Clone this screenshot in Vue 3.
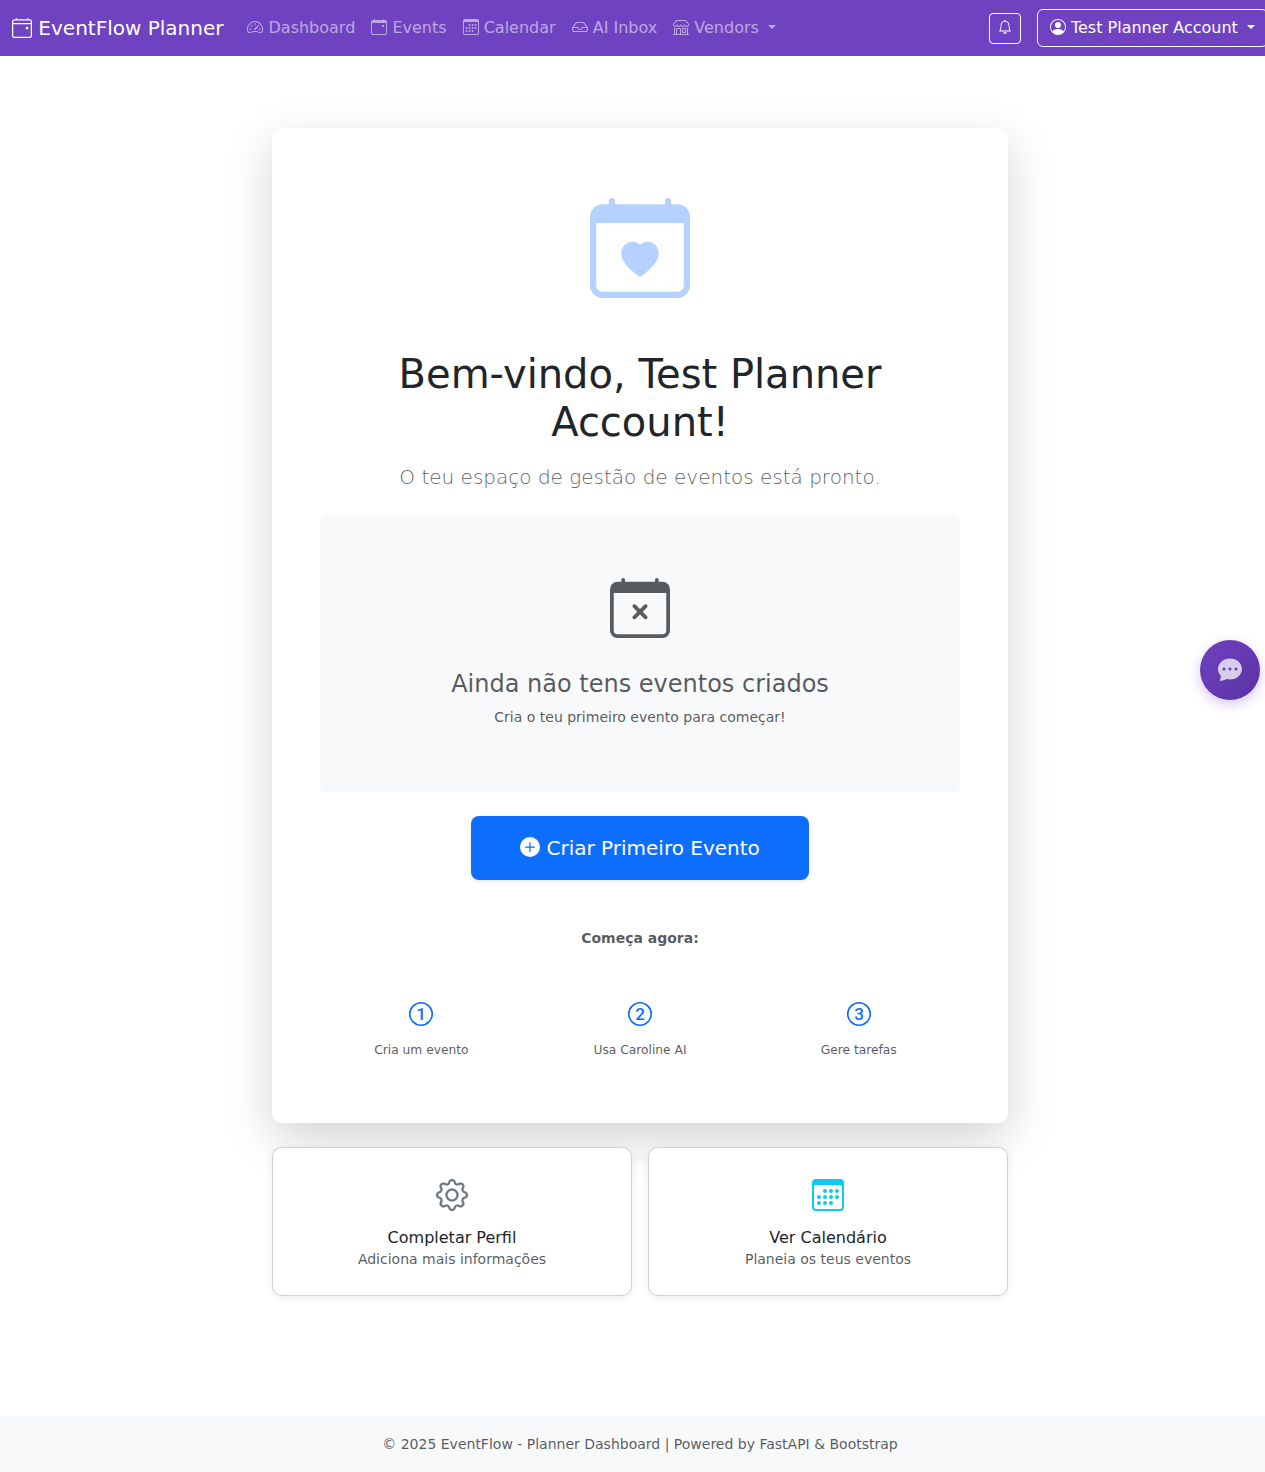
<script setup>
import { h } from 'vue'

const calendarFrame =
  'M3.5 0a.5.5 0 0 1 .5.5V1h8V.5a.5.5 0 0 1 1 0V1h1a2 2 0 0 1 2 2v11a2 2 0 0 1-2 2H2a2 2 0 0 1-2-2V3a2 2 0 0 1 2-2h1V.5a.5.5 0 0 1 .5-.5M1 4v10a1 1 0 0 0 1 1h12a1 1 0 0 0 1-1V4z'

const paths = {
  brand: [
    'M3.5 0a.5.5 0 0 1 .5.5V1h8V.5a.5.5 0 0 1 1 0V1h1a2 2 0 0 1 2 2v11a2 2 0 0 1-2 2H2a2 2 0 0 1-2-2V3a2 2 0 0 1 2-2h1V.5a.5.5 0 0 1 .5-.5M2 2a1 1 0 0 0-1 1v1h14V3a1 1 0 0 0-1-1zm13 3H1v9a1 1 0 0 0 1 1h12a1 1 0 0 0 1-1z',
    'M11 7.5a.5.5 0 0 1 .5-.5h1a.5.5 0 0 1 .5.5v1a.5.5 0 0 1-.5.5h-1a.5.5 0 0 1-.5-.5z'
  ],
  speedometer: [
    'M8 4a.5.5 0 0 1 .5.5V6a.5.5 0 0 1-1 0V4.5A.5.5 0 0 1 8 4M3.732 5.732a.5.5 0 0 1 .707 0l.915.914a.5.5 0 1 1-.708.708l-.914-.915a.5.5 0 0 1 0-.707M2 10a.5.5 0 0 1 .5-.5h1.586a.5.5 0 0 1 0 1H2.5A.5.5 0 0 1 2 10m9.5 0a.5.5 0 0 1 .5-.5h1.5a.5.5 0 0 1 0 1H12a.5.5 0 0 1-.5-.5m.754-4.246a.39.39 0 0 0-.527-.02L7.547 9.31a.91.91 0 1 0 1.302 1.258l3.434-4.297a.39.39 0 0 0-.029-.518z',
    'M0 10a8 8 0 1 1 15.547 2.661c-.442 1.253-1.845 1.602-2.932 1.25C11.309 13.488 9.475 13 8 13c-1.474 0-3.31.488-4.615.911-1.087.352-2.49.003-2.932-1.25A8 8 0 0 1 0 10m8-7a7 7 0 0 0-6.603 9.329c.203.575.923.876 1.68.63C4.397 12.533 6.358 12 8 12s3.604.532 4.923.96c.757.245 1.477-.056 1.68-.631A7 7 0 0 0 8 3'
  ],
  event: [
    'M11 6.5a.5.5 0 0 1 .5-.5h1a.5.5 0 0 1 .5.5v1a.5.5 0 0 1-.5.5h-1a.5.5 0 0 1-.5-.5z',
    calendarFrame
  ],
  calendar: [
    'M14 0H2a2 2 0 0 0-2 2v12a2 2 0 0 0 2 2h12a2 2 0 0 0 2-2V2a2 2 0 0 0-2-2M1 3.857C1 3.384 1.448 3 2 3h12c.552 0 1 .384 1 .857v10.286c0 .473-.448.857-1 .857H2c-.552 0-1-.384-1-.857z',
    'M6.5 7a1 1 0 1 0 0-2 1 1 0 0 0 0 2m3 0a1 1 0 1 0 0-2 1 1 0 0 0 0 2m3 0a1 1 0 1 0 0-2 1 1 0 0 0 0 2m-9 3a1 1 0 1 0 0-2 1 1 0 0 0 0 2m3 0a1 1 0 1 0 0-2 1 1 0 0 0 0 2m3 0a1 1 0 1 0 0-2 1 1 0 0 0 0 2m3 0a1 1 0 1 0 0-2 1 1 0 0 0 0 2m-9 3a1 1 0 1 0 0-2 1 1 0 0 0 0 2m3 0a1 1 0 1 0 0-2 1 1 0 0 0 0 2m3 0a1 1 0 1 0 0-2 1 1 0 0 0 0 2'
  ],
  inbox: [
    'M4.98 4a.5.5 0 0 0-.39.188L1.54 8H6a.5.5 0 0 1 .5.5 1.5 1.5 0 1 0 3 0A.5.5 0 0 1 10 8h4.46l-3.05-3.812A.5.5 0 0 0 11.02 4zm9.954 5H10.45a2.5 2.5 0 0 1-4.9 0H1.066l.32 2.562a.5.5 0 0 0 .497.438h12.234a.5.5 0 0 0 .496-.438zM3.809 3.563A1.5 1.5 0 0 1 4.981 3h6.038a1.5 1.5 0 0 1 1.172.563l3.7 4.625a.5.5 0 0 1 .105.374l-.39 3.124A1.5 1.5 0 0 1 14.117 13H1.883a1.5 1.5 0 0 1-1.489-1.314l-.39-3.124a.5.5 0 0 1 .106-.374z'
  ],
  shop: [
    'M2.97 1.35A1 1 0 0 1 3.73 1h8.54a1 1 0 0 1 .76.35l2.609 3.044A1.5 1.5 0 0 1 16 5.37v.255a2.375 2.375 0 0 1-4.25 1.458A2.37 2.37 0 0 1 9.875 8 2.37 2.37 0 0 1 8 7.083 2.37 2.37 0 0 1 6.125 8a2.37 2.37 0 0 1-1.875-.917A2.375 2.375 0 0 1 0 5.625V5.37a1.5 1.5 0 0 1 .361-.976zm1.78 4.275a1.375 1.375 0 0 0 2.75 0 .5.5 0 0 1 1 0 1.375 1.375 0 0 0 2.75 0 .5.5 0 0 1 1 0 1.375 1.375 0 1 0 2.75 0V5.37a.5.5 0 0 0-.12-.325L12.27 2H3.73L1.12 5.045A.5.5 0 0 0 1 5.37v.255a1.375 1.375 0 0 0 2.75 0 .5.5 0 0 1 1 0M1.5 8.5A.5.5 0 0 1 2 9v6h1v-5a1 1 0 0 1 1-1h3a1 1 0 0 1 1 1v5h6V9a.5.5 0 0 1 1 0v6h.5a.5.5 0 0 1 0 1H.5a.5.5 0 0 1 0-1H1V9a.5.5 0 0 1 .5-.5M4 15h3v-5H4zm5-5a1 1 0 0 1 1-1h2a1 1 0 0 1 1 1v3a1 1 0 0 1-1 1h-2a1 1 0 0 1-1-1zm3 0h-2v3h2z'
  ],
  bell: [
    'M8 16a2 2 0 0 0 2-2H6a2 2 0 0 0 2 2M8 1.918l-.797.161A4 4 0 0 0 4 6c0 .628-.134 2.197-.459 3.742-.16.767-.376 1.566-.663 2.258h10.244c-.287-.692-.502-1.49-.663-2.258C12.134 8.197 12 6.628 12 6a4 4 0 0 0-3.203-3.92zM14.22 12c.223.447.481.801.78 1H1c.299-.199.557-.553.78-1C2.68 10.2 3 6.88 3 6c0-2.42 1.72-4.44 4.005-4.901a1 1 0 1 1 1.99 0A5 5 0 0 1 13 6c0 .88.32 4.2 1.22 6'
  ],
  person: [
    'M11 6a3 3 0 1 1-6 0 3 3 0 0 1 6 0',
    'M0 8a8 8 0 1 1 16 0A8 8 0 0 1 0 8m8-7a7 7 0 0 0-5.468 11.37C3.242 11.226 4.805 10 8 10s4.757 1.225 5.468 2.37A7 7 0 0 0 8 1'
  ],
  heart: [
    calendarFrame,
    'M8 7.493c1.664-1.711 5.825 1.283 0 5.132-5.825-3.85-1.664-6.843 0-5.132'
  ],
  cross: [
    calendarFrame,
    'M6.146 7.146a.5.5 0 0 1 .708 0L8 8.293l1.146-1.147a.5.5 0 1 1 .708.708L8.707 9l1.147 1.146a.5.5 0 0 1-.708.708L8 9.707l-1.146 1.147a.5.5 0 0 1-.708-.708L7.293 9 6.146 7.854a.5.5 0 0 1 0-.708'
  ],
  plus: [
    'M16 8A8 8 0 1 1 0 8a8 8 0 0 1 16 0M8.5 4.5a.5.5 0 0 0-1 0v3h-3a.5.5 0 0 0 0 1h3v3a.5.5 0 0 0 1 0v-3h3a.5.5 0 0 0 0-1h-3z'
  ],
  gear: [
    'M8 4.754a3.246 3.246 0 1 0 0 6.492 3.246 3.246 0 0 0 0-6.492M5.754 8a2.246 2.246 0 1 1 4.492 0 2.246 2.246 0 0 1-4.492 0',
    'M9.796 1.343c-.527-1.79-3.065-1.79-3.592 0l-.094.319a.873.873 0 0 1-1.255.52l-.292-.16c-1.64-.892-3.433.902-2.54 2.541l.159.292a.873.873 0 0 1-.52 1.255l-.319.094c-1.79.527-1.79 3.065 0 3.592l.319.094a.873.873 0 0 1 .52 1.255l-.16.292c-.892 1.64.901 3.434 2.541 2.54l.292-.159a.873.873 0 0 1 1.255.52l.094.319c.527 1.79 3.065 1.79 3.592 0l.094-.319a.873.873 0 0 1 1.255-.52l.292.16c1.64.893 3.434-.902 2.54-2.541l-.159-.292a.873.873 0 0 1 .52-1.255l.319-.094c1.79-.527 1.79-3.065 0-3.592l-.319-.094a.873.873 0 0 1-.52-1.255l.16-.292c.893-1.64-.902-3.433-2.541-2.54l-.292.159a.873.873 0 0 1-1.255-.52zm-2.633.283c.246-.835 1.428-.835 1.674 0l.094.319a1.873 1.873 0 0 0 2.693 1.115l.291-.16c.764-.415 1.6.42 1.184 1.185l-.159.292a1.873 1.873 0 0 0 1.116 2.692l.318.094c.835.246.835 1.428 0 1.674l-.319.094a1.873 1.873 0 0 0-1.115 2.693l.16.291c.415.764-.42 1.6-1.185 1.184l-.291-.159a1.873 1.873 0 0 0-2.693 1.116l-.094.318c-.246.835-1.428.835-1.674 0l-.094-.319a1.873 1.873 0 0 0-2.692-1.115l-.292.16c-.764.415-1.6-.42-1.184-1.185l.159-.291A1.873 1.873 0 0 0 1.945 8.93l-.319-.094c-.835-.246-.835-1.428 0-1.674l.319-.094A1.873 1.873 0 0 0 3.06 4.377l-.16-.292c-.415-.764.42-1.6 1.185-1.184l.292.159a1.873 1.873 0 0 0 2.692-1.115z'
  ],
  chat: [
    'M16 8c0 3.866-3.582 7-8 7a9 9 0 0 1-2.347-.306c-.584.296-1.925.864-4.181 1.234-.2.032-.352-.176-.273-.362.354-.836.674-1.95.77-2.966C.744 11.37 0 9.76 0 8c0-3.866 3.582-7 8-7s8 3.134 8 7M5 8a1 1 0 1 0-2 0 1 1 0 0 0 2 0m4 0a1 1 0 1 0-2 0 1 1 0 0 0 2 0m3 1a1 1 0 1 0 0-2 1 1 0 0 0 0 2'
  ]
}

const Icon = (props) =>
  h(
    'svg',
    { class: 'icon', viewBox: '0 0 16 16', fill: 'currentColor', 'aria-hidden': 'true' },
    paths[props.name].map((d) => h('path', { d }))
  )
Icon.props = ['name']

const links = [
  { icon: 'speedometer', label: 'Dashboard' },
  { icon: 'event', label: 'Events' },
  { icon: 'calendar', label: 'Calendar' },
  { icon: 'inbox', label: 'AI Inbox' },
  { icon: 'shop', label: 'Vendors', menu: true }
]
const steps = ['Cria um evento', 'Usa Caroline AI', 'Gere tarefas']
const shortcuts = [
  { icon: 'gear', tone: 'gray', title: 'Completar Perfil', text: 'Adiciona mais informações' },
  { icon: 'calendar', tone: 'cyan', title: 'Ver Calendário', text: 'Planeia os teus eventos' }
]
</script>

<template>
  <div class="viewport">
    <div class="page">
      <nav class="navbar">
        <a class="brand"><Icon name="brand" /> EventFlow Planner</a>
        <div class="links">
          <a v-for="link in links" :key="link.label" class="link"><Icon :name="link.icon" /> {{ link.label }}<span v-if="link.menu" class="caret"></span></a>
        </div>
        <button class="bell"><Icon name="bell" /></button>
        <button class="account"><Icon name="person" /> Test Planner Account<span class="caret"></span></button>
      </nav>

      <main class="main">
        <section class="welcome">
          <div class="hero-icon"><Icon name="heart" /></div>
          <h1>Bem-vindo, Test Planner Account!</h1>
          <p class="lead">O teu espaço de gestão de eventos está pronto.</p>
          <div class="empty">
            <div class="empty-icon"><Icon name="cross" /></div>
            <h4>Ainda não tens eventos criados</h4>
            <p>Cria o teu primeiro evento para começar!</p>
          </div>
          <a class="create"><Icon name="plus" /> Criar Primeiro Evento</a>
          <p class="start">Começa agora:</p>
          <div class="steps">
            <div v-for="(step, i) in steps" :key="step" class="step">
              <div class="step-icon">
                <svg class="icon" viewBox="0 0 16 16">
                  <circle cx="8" cy="8" r="7.5" fill="none" stroke="currentColor" stroke-width="1.1" />
                  <text x="8" y="12" text-anchor="middle" fill="currentColor">{{ i + 1 }}</text>
                </svg>
              </div>
              <div class="step-text">{{ step }}</div>
            </div>
          </div>
        </section>

        <div class="shortcuts">
          <section v-for="s in shortcuts" :key="s.title" class="shortcut">
            <div class="shortcut-icon" :class="s.tone"><Icon :name="s.icon" /></div>
            <h6>{{ s.title }}</h6>
            <p>{{ s.text }}</p>
          </section>
        </div>
      </main>

      <footer class="footer">© 2025 EventFlow - Planner Dashboard | Powered by FastAPI &amp; Bootstrap</footer>
    </div>
    <button class="chat"><Icon name="chat" /></button>
  </div>
</template>

<style>
body {
  margin: 0;
  background: #fff;
}
</style>

<style scoped>
.viewport {
  position: relative;
  height: 1472px;
  overflow: hidden;
  font: 16px/1.5 "DejaVu Sans", sans-serif;
  color: #212529;
}
.viewport * {
  box-sizing: border-box;
}
.page {
  display: flex;
  flex-direction: column;
  width: 1280px;
  height: 100%;
}
h1, h4, h6, p {
  margin: 0;
  font-weight: 400;
}
button {
  font-family: inherit;
  line-height: 1.5;
  background: transparent;
}
.icon {
  display: inline-block;
  width: 1em;
  height: 1em;
  overflow: visible;
  vertical-align: -0.125em;
}
.navbar {
  display: flex;
  align-items: center;
  height: 56px;
  padding: 0 12px;
  background: #6f42c1;
  color: #fff;
  white-space: nowrap;
}
.brand {
  margin-right: 16px;
  font-size: 20px;
}
.links {
  display: flex;
  flex: 1;
}
.link {
  padding: 8px;
  color: rgba(255, 255, 255, 0.55);
}
.caret {
  display: inline-block;
  margin-left: 9.17px;
  vertical-align: 0.255em;
  border-top: 0.3em solid;
  border-right: 0.3em solid transparent;
  border-left: 0.3em solid transparent;
}
.bell {
  margin-right: 16px;
  padding: 4px 8px;
  font-size: 14px;
  color: #fff;
  border: 1px solid #fff;
  border-radius: 4px;
}
.account {
  padding: 6px 12px;
  font-size: 16px;
  color: #fff;
  border: 1px solid #fff;
  border-radius: 6px;
}
.main {
  flex: 1;
  width: 736px;
  margin: 72px auto 0;
}
.welcome {
  padding: 48px 48px 64px;
  text-align: center;
  background: #fff;
  border-radius: 10px;
  box-shadow: 0 16px 48px rgba(0, 0, 0, 0.175);
}
.hero-icon {
  margin-bottom: 24px;
  font-size: 100px;
  color: #0d6efd;
  opacity: 0.3;
}
h1 {
  margin-bottom: 16px;
  font-size: 40px;
  line-height: 1.2;
}
.lead {
  margin-bottom: 24px;
  font-size: 20px;
  font-weight: 300;
  color: rgba(33, 37, 41, 0.75);
}
.empty {
  margin-bottom: 24px;
  padding: 48px 48px 64px;
  color: rgba(33, 37, 41, 0.75);
  background: #f8f9fa;
  border-radius: 6px;
}
.empty-icon {
  margin-bottom: 16px;
  font-size: 60px;
}
h4 {
  margin-bottom: 8px;
  font-size: 24px;
  line-height: 1.2;
}
.empty p {
  font-size: 14px;
}
.create {
  display: inline-block;
  padding: 17px 49px;
  font-size: 20px;
  color: #fff;
  vertical-align: top;
  background: #0d6efd;
  border-radius: 8px;
  box-shadow: 0 2px 4px rgba(0, 0, 0, 0.075);
}
.start {
  margin: 48px 0;
  font-size: 14px;
  font-weight: 700;
  color: rgba(33, 37, 41, 0.75);
}
.steps {
  display: flex;
  margin: 0 -8px;
}
.step {
  flex: 1;
}
.step-icon {
  margin-bottom: 8px;
  font-size: 24px;
  color: #0d6efd;
}
.step-icon text {
  font: 500 11.4px Roboto, sans-serif;
}
.step-text {
  font-size: 12.25px;
  color: rgba(33, 37, 41, 0.75);
}
.shortcuts {
  display: flex;
  gap: 16px;
  margin-top: 24px;
}
.shortcut {
  flex: 1;
  padding: 24px;
  text-align: center;
  background: #fff;
  border: 1px solid rgba(0, 0, 0, 0.175);
  border-radius: 10px;
  box-shadow: 0 2px 8px rgba(0, 0, 0, 0.075);
}
.shortcut-icon {
  margin-bottom: 8px;
  font-size: 32px;
}
.gray {
  color: #6c757d;
}
.gray .icon {
  stroke: currentColor;
  stroke-width: 0.15;
}
.cyan {
  color: #0dcaf0;
}
h6 {
  font-size: 16px;
  line-height: 1.2;
}
.shortcut p {
  font-size: 14px;
  line-height: 24px;
  color: rgba(33, 37, 41, 0.75);
}
.footer {
  height: 56px;
  font-size: 14px;
  line-height: 56px;
  text-align: center;
  color: rgba(33, 37, 41, 0.75);
  background: #f8f9fa;
}
.chat {
  position: absolute;
  top: 640px;
  right: 5px;
  display: flex;
  align-items: center;
  justify-content: center;
  width: 60px;
  height: 60px;
  padding: 0 0 2px;
  font-size: 24px;
  color: rgba(255, 255, 255, 0.75);
  background: linear-gradient(135deg, #6f42c1, #5a32a3);
  border: 0;
  border-radius: 50%;
  box-shadow: 0 4px 12px rgba(111, 66, 193, 0.3);
}
</style>
